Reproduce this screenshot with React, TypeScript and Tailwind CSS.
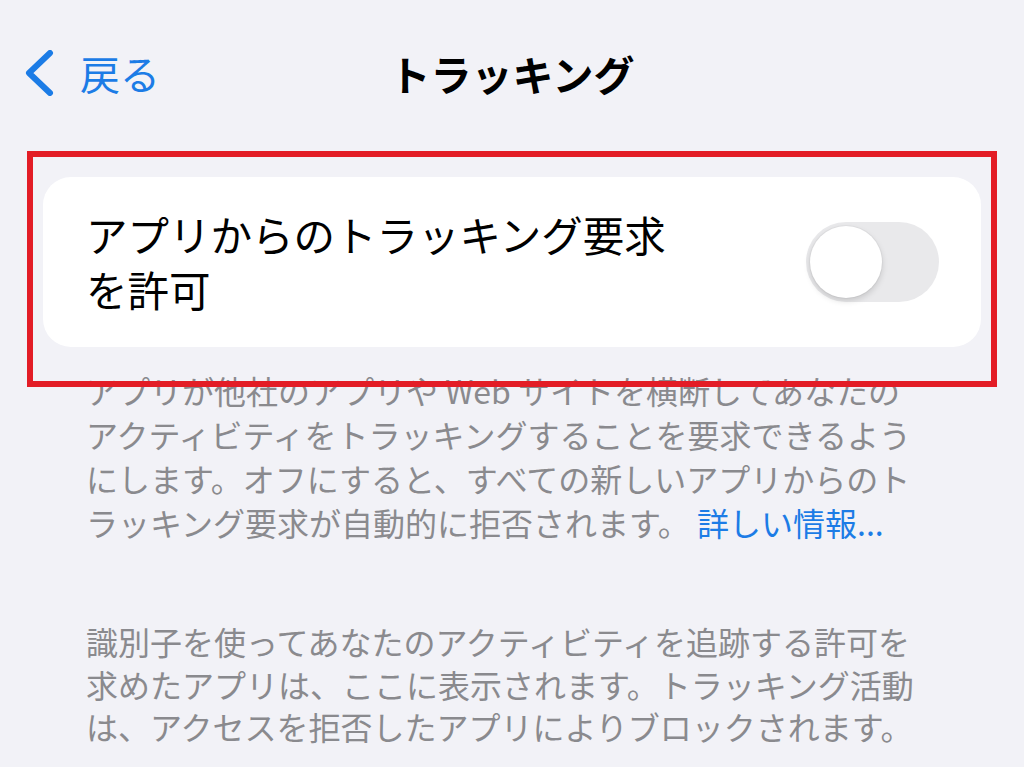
import React from "react";

const jp = { fontFamily: '"Noto Sans CJK JP", "Noto Sans", sans-serif' };

export default function App() {
  return (
    <div
      className="relative w-[1024px] h-[767px] overflow-hidden bg-[#f2f2f7] text-black"
      style={jp}
    >
      {/* Header */}
      <div className="grid grid-cols-[1fr_auto_1fr] items-center h-[146px]">
        <div className="flex items-center pl-[24px] gap-[26px] text-[#1c7ce6]">
          <svg width="30" height="46" viewBox="0 0 30 46" fill="none">
            <path
              d="M26 3 L5 23 L26 43"
              stroke="#1c7ce6"
              strokeWidth="6"
              strokeLinecap="round"
              strokeLinejoin="round"
            />
          </svg>
          <span className="text-[40px] leading-none">戻る</span>
        </div>
        <div className="text-[41px] font-bold leading-none tracking-[0px]">トラッキング</div>
        <div />
      </div>

      {/* Content */}
      <div className="px-[43px] pt-[31px]">
        <div className="flex items-center justify-between h-[170px] rounded-[28px] bg-white pl-[43px] pr-[42px]">
          <div className="text-[41.5px] leading-[55px]">
            アプリからのトラッキング要求
            <br />
            を許可
          </div>
          <div className="w-[133px] h-[80px] rounded-full bg-[#e9e9eb] flex items-center p-[4px]">
            <div className="w-[72px] h-[72px] rounded-full bg-white shadow-[0_3px_6px_rgba(0,0,0,0.15),0_0_0_1px_rgba(0,0,0,0.03)]" />
          </div>
        </div>

        <div className="px-[43px] mt-[21px] text-[32px] leading-[44px] text-[#8a8a8e]">
          <p>アプリが他社のアプリや Web サイトを横断してあなたの</p>
          <p>アクティビティをトラッキングすることを要求できるよう</p>
          <p>にします。オフにすると、すべての新しいアプリからのト</p>
          <p>
            ラッキング要求が自動的に拒否されます。 <span className="text-[#1c7ce6]">詳しい情報...</span>
          </p>
        </div>

        <div className="px-[43px] mt-[76px] text-[32px] leading-[42.5px] text-[#8a8a8e]">
          <p>識別子を使ってあなたのアクティビティを追跡する許可を</p>
          <p>求めたアプリは、ここに表示されます。トラッキング活動</p>
          <p>は、アクセスを拒否したアプリによりブロックされます。</p>
        </div>
      </div>

      {/* Red annotation box */}
      <div className="absolute left-[27px] top-[151px] w-[970px] h-[236px] border-[6px] border-[#e31d26] pointer-events-none" />
    </div>
  );
}
